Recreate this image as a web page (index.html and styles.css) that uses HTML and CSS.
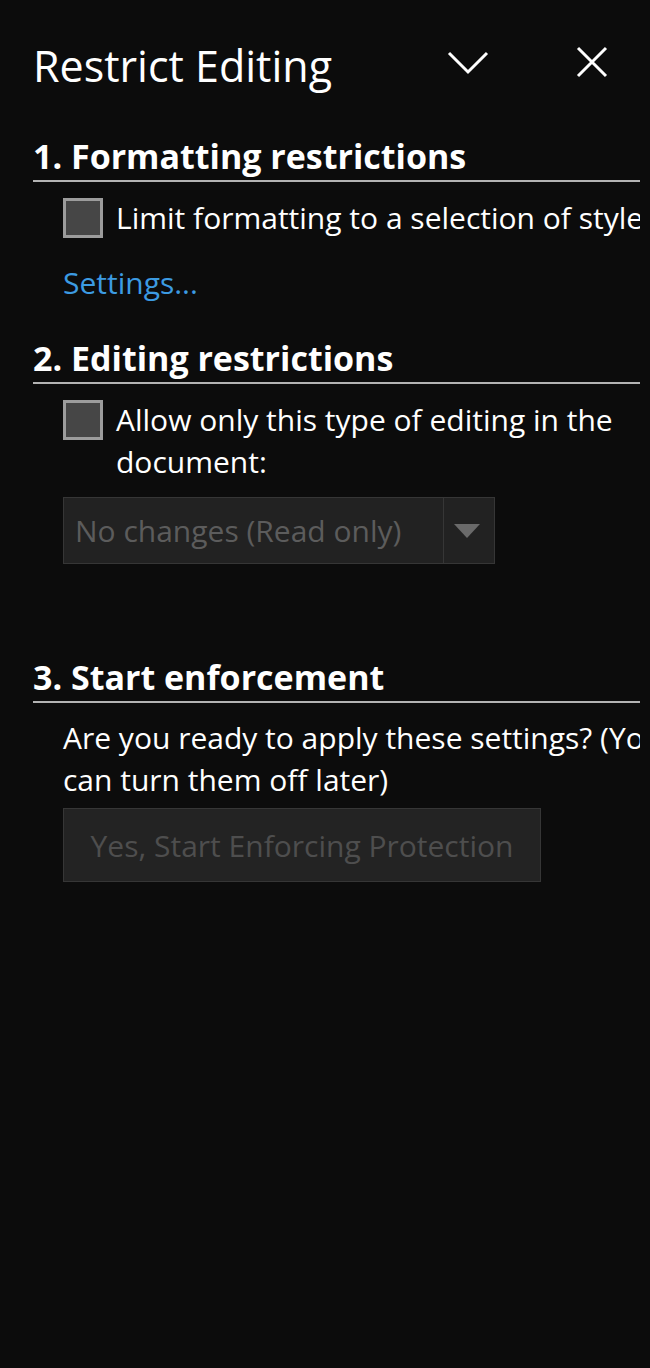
FILE: index.html
```html
<!DOCTYPE html>
<html lang="en">
<head>
  <meta charset="UTF-8">
  <meta name="viewport" content="width=device-width, initial-scale=1.0">
  <title>Restrict Editing</title>
  <link rel="stylesheet" href="styles.css">
</head>
<body>
  <div class="pane">
    <div class="pane-header">
      <h1 class="pane-title">Restrict Editing</h1>
      <div class="pane-actions">
        <button class="icon-btn icon-chevron" title="Task Pane Options">
          <svg width="42" height="24" viewBox="0 0 42 24">
            <polyline points="2,2 21,21 40,2" fill="none" stroke="#fff" stroke-width="3"/>
          </svg>
        </button>
        <button class="icon-btn icon-close" title="Close">
          <svg width="32" height="32" viewBox="0 0 32 32">
            <path d="M2 2 L30 30 M30 2 L2 30" fill="none" stroke="#fff" stroke-width="3"/>
          </svg>
        </button>
      </div>
    </div>

    <div class="section section-format">
      <h2 class="section-title">1. Formatting restrictions</h2>
      <div class="section-body">
        <label class="check-row">
          <span class="checkbox"></span>
          <span class="check-label">Limit formatting to a selection of styles</span>
        </label>
        <a class="link" href="#">Settings...</a>
      </div>
    </div>

    <div class="section section-edit">
      <h2 class="section-title">2. Editing restrictions</h2>
      <div class="section-body">
        <label class="check-row">
          <span class="checkbox"></span>
          <span class="check-label">Allow only this type of editing in the<br>document:</span>
        </label>
        <div class="dropdown">
          <span class="dropdown-value">No changes (Read only)</span>
          <span class="dropdown-arrow"></span>
        </div>
      </div>
    </div>

    <div class="section section-enforce">
      <h2 class="section-title">3. Start enforcement</h2>
      <div class="section-body">
        <p class="text">Are you ready to apply these settings? (You<br>can turn them off later)</p>
        <button class="btn-disabled" disabled>Yes, Start Enforcing Protection</button>
      </div>
    </div>
  </div>
</body>
</html>
```

FILE: styles.css
```css
body {
  margin: 0;
  padding: 0;
  background: #0c0c0c;
  color: #fff;
  font-family: 'Open Sans', 'Liberation Sans', sans-serif;
  height: 1368px;
  overflow: hidden;
}

.pane {
  margin: 0 10px 0 33px;
}

.pane-header {
  display: flex;
  align-items: flex-start;
  justify-content: space-between;
  padding-top: 41px;
  height: 50px;
}

.pane-title {
  margin: 0;
  font-size: 43px;
  font-weight: 400;
  line-height: 50px;
}

.pane-actions {
  display: flex;
  align-items: flex-start;
}

.icon-btn {
  background: none;
  border: none;
  padding: 0;
  cursor: pointer;
}

.icon-btn svg {
  display: block;
}

.icon-chevron {
  margin-top: 10px;
  margin-right: 87px;
}

.icon-close {
  margin-top: 5px;
  margin-right: 32px;
}

.section-title {
  margin: 0;
  font-size: 34px;
  font-weight: 700;
  line-height: 40px;
  padding-bottom: 4px;
  border-bottom: 2px solid #b4b4b4;
  white-space: nowrap;
}

.section-format .section-title {
  margin-top: 45px;
}

.section-edit .section-title {
  margin-top: 34px;
}

.section-enforce .section-title {
  margin-top: 93px;
}

.section-body {
  padding-left: 30px;
  font-size: 30px;
  line-height: 42px;
  overflow: hidden;
}

.check-row {
  display: flex;
  align-items: flex-start;
  margin-top: 16px;
  white-space: nowrap;
}

.checkbox {
  flex: none;
  width: 34px;
  height: 34px;
  border: 3px solid #9c9c9c;
  background: #464646;
  margin-right: 13px;
}

.check-label {
  margin-top: -1px;
}

.link {
  display: block;
  margin-top: 23px;
  color: #3c9be2;
  text-decoration: none;
}

.dropdown {
  display: flex;
  width: 430px;
  height: 65px;
  margin-top: 14px;
  border: 1px solid #363636;
  background: #222;
}

.dropdown-value {
  flex: 1;
  padding-left: 11px;
  line-height: 65px;
  color: #5c5c5c;
  white-space: nowrap;
}

.dropdown-arrow {
  width: 50px;
  border-left: 1px solid #363636;
  position: relative;
}

.dropdown-arrow::after {
  content: "";
  position: absolute;
  left: 10px;
  top: 26px;
  border-left: 13px solid transparent;
  border-right: 13px solid transparent;
  border-top: 14px solid #6a6a6a;
}

.text {
  margin: 14px 0 0;
  white-space: nowrap;
}

.btn-disabled {
  display: block;
  width: 478px;
  height: 74px;
  margin-top: 7px;
  background: #232323;
  border: 1px solid #363636;
  color: #4e4e4e;
  font-family: inherit;
  font-size: 30px;
  padding: 0;
}
```
